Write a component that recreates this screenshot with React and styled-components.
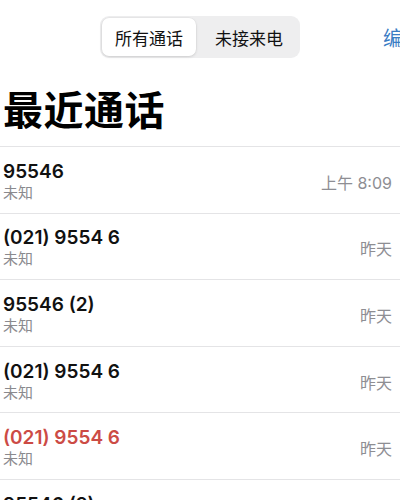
import React from 'react';
import styled, { createGlobalStyle } from 'styled-components';

const GlobalStyle = createGlobalStyle`
  html, body {
    margin: 0;
    padding: 0;
    background: #ffffff;
  }
  body {
    font-family: "Inter", "Noto Sans CJK SC", sans-serif;
    -webkit-font-smoothing: antialiased;
  }
`;

const calls = [
  { number: '95546', label: '未知', time: '上午 8:09' },
  { number: '(021) 9554 6', label: '未知', time: '昨天' },
  { number: '95546 (2)', label: '未知', time: '昨天' },
  { number: '(021) 9554 6', label: '未知', time: '昨天' },
  { number: '(021) 9554 6', label: '未知', time: '昨天', missed: true },
  { number: '95546 (2)', label: '未知', time: '昨天' },
];

const Screen = styled.div`
  width: 400px;
  height: 500px;
  overflow: hidden;
  background: #fff;
`;

// the screenshot is a crop of a wider phone screen
const Page = styled.div`
  width: 430px;
`;

const Header = styled.div`
  display: grid;
  grid-template-columns: 100px 200px 1fr;
  align-items: center;
  padding-top: 16px;
`;

const Segmented = styled.div`
  grid-column: 2;
  display: grid;
  grid-template-columns: 94px 1fr;
  height: 42px;
  padding: 2px;
  box-sizing: border-box;
  background: #eeeeef;
  border-radius: 9px;
`;

const Segment = styled.div`
  display: flex;
  align-items: center;
  justify-content: center;
  font-size: 17px;
  color: #111;
  border-radius: 7px;
  padding-left: ${(p) => (p.$active ? '0' : '4px')};
  background: ${(p) => (p.$active ? '#ffffff' : 'transparent')};
  box-shadow: ${(p) => (p.$active ? '0 1px 3px rgba(0,0,0,0.12), 0 0 0 0.5px rgba(0,0,0,0.04)' : 'none')};
`;

const EditButton = styled.div`
  grid-column: 3;
  padding-left: 83px;
  font-size: 20px;
  color: #3a7cc4;
  white-space: nowrap;
`;

const Title = styled.h1`
  margin: 29px 0 11px 3px;
  font-size: 40px;
  line-height: 48px;
  font-weight: 700;
  color: #000;
  letter-spacing: 0.5px;
`;

const List = styled.div`
  border-top: 1px solid #e4e4e6;
`;

const Row = styled.div`
  display: flex;
  align-items: center;
  height: 65.6px;
  box-sizing: content-box;
  padding: 0 8px 0 3px;
  border-bottom: 1px solid #e4e4e6;
`;

const Info = styled.div`
  flex: 1;
  display: flex;
  flex-direction: column;
  padding-top: 4px;
`;

const Number = styled.div`
  font-size: 19px;
  line-height: 22px;
  font-weight: 600;
  color: ${(p) => (p.$missed ? '#cc4b45' : '#111')};
`;

const Label = styled.div`
  font-size: 15px;
  line-height: 20px;
  color: #8a8a8e;
`;

const Time = styled.div`
  font-size: 16px;
  color: #8e8e93;
  padding-top: 4px;
  margin-right: 8px;
`;

const InfoIcon = () => (
  <svg width="22" height="22" viewBox="0 0 22 22" fill="none">
    <circle cx="11" cy="11" r="10" stroke="#3478f6" strokeWidth="1.4" />
    <circle cx="11" cy="6.5" r="1.2" fill="#3478f6" />
    <path d="M11 9.5v7" stroke="#3478f6" strokeWidth="1.8" strokeLinecap="round" />
  </svg>
);

export default function App() {
  return (
    <Screen>
      <GlobalStyle />
      <Page>
        <Header>
          <Segmented>
            <Segment $active>所有通话</Segment>
            <Segment>未接来电</Segment>
          </Segmented>
          <EditButton>编辑</EditButton>
        </Header>
        <Title>最近通话</Title>
        <List>
          {calls.map((c, i) => (
            <Row key={i}>
              <Info>
                <Number $missed={c.missed}>{c.number}</Number>
                <Label>{c.label}</Label>
              </Info>
              <Time>{c.time}</Time>
              <InfoIcon />
            </Row>
          ))}
        </List>
      </Page>
    </Screen>
  );
}
